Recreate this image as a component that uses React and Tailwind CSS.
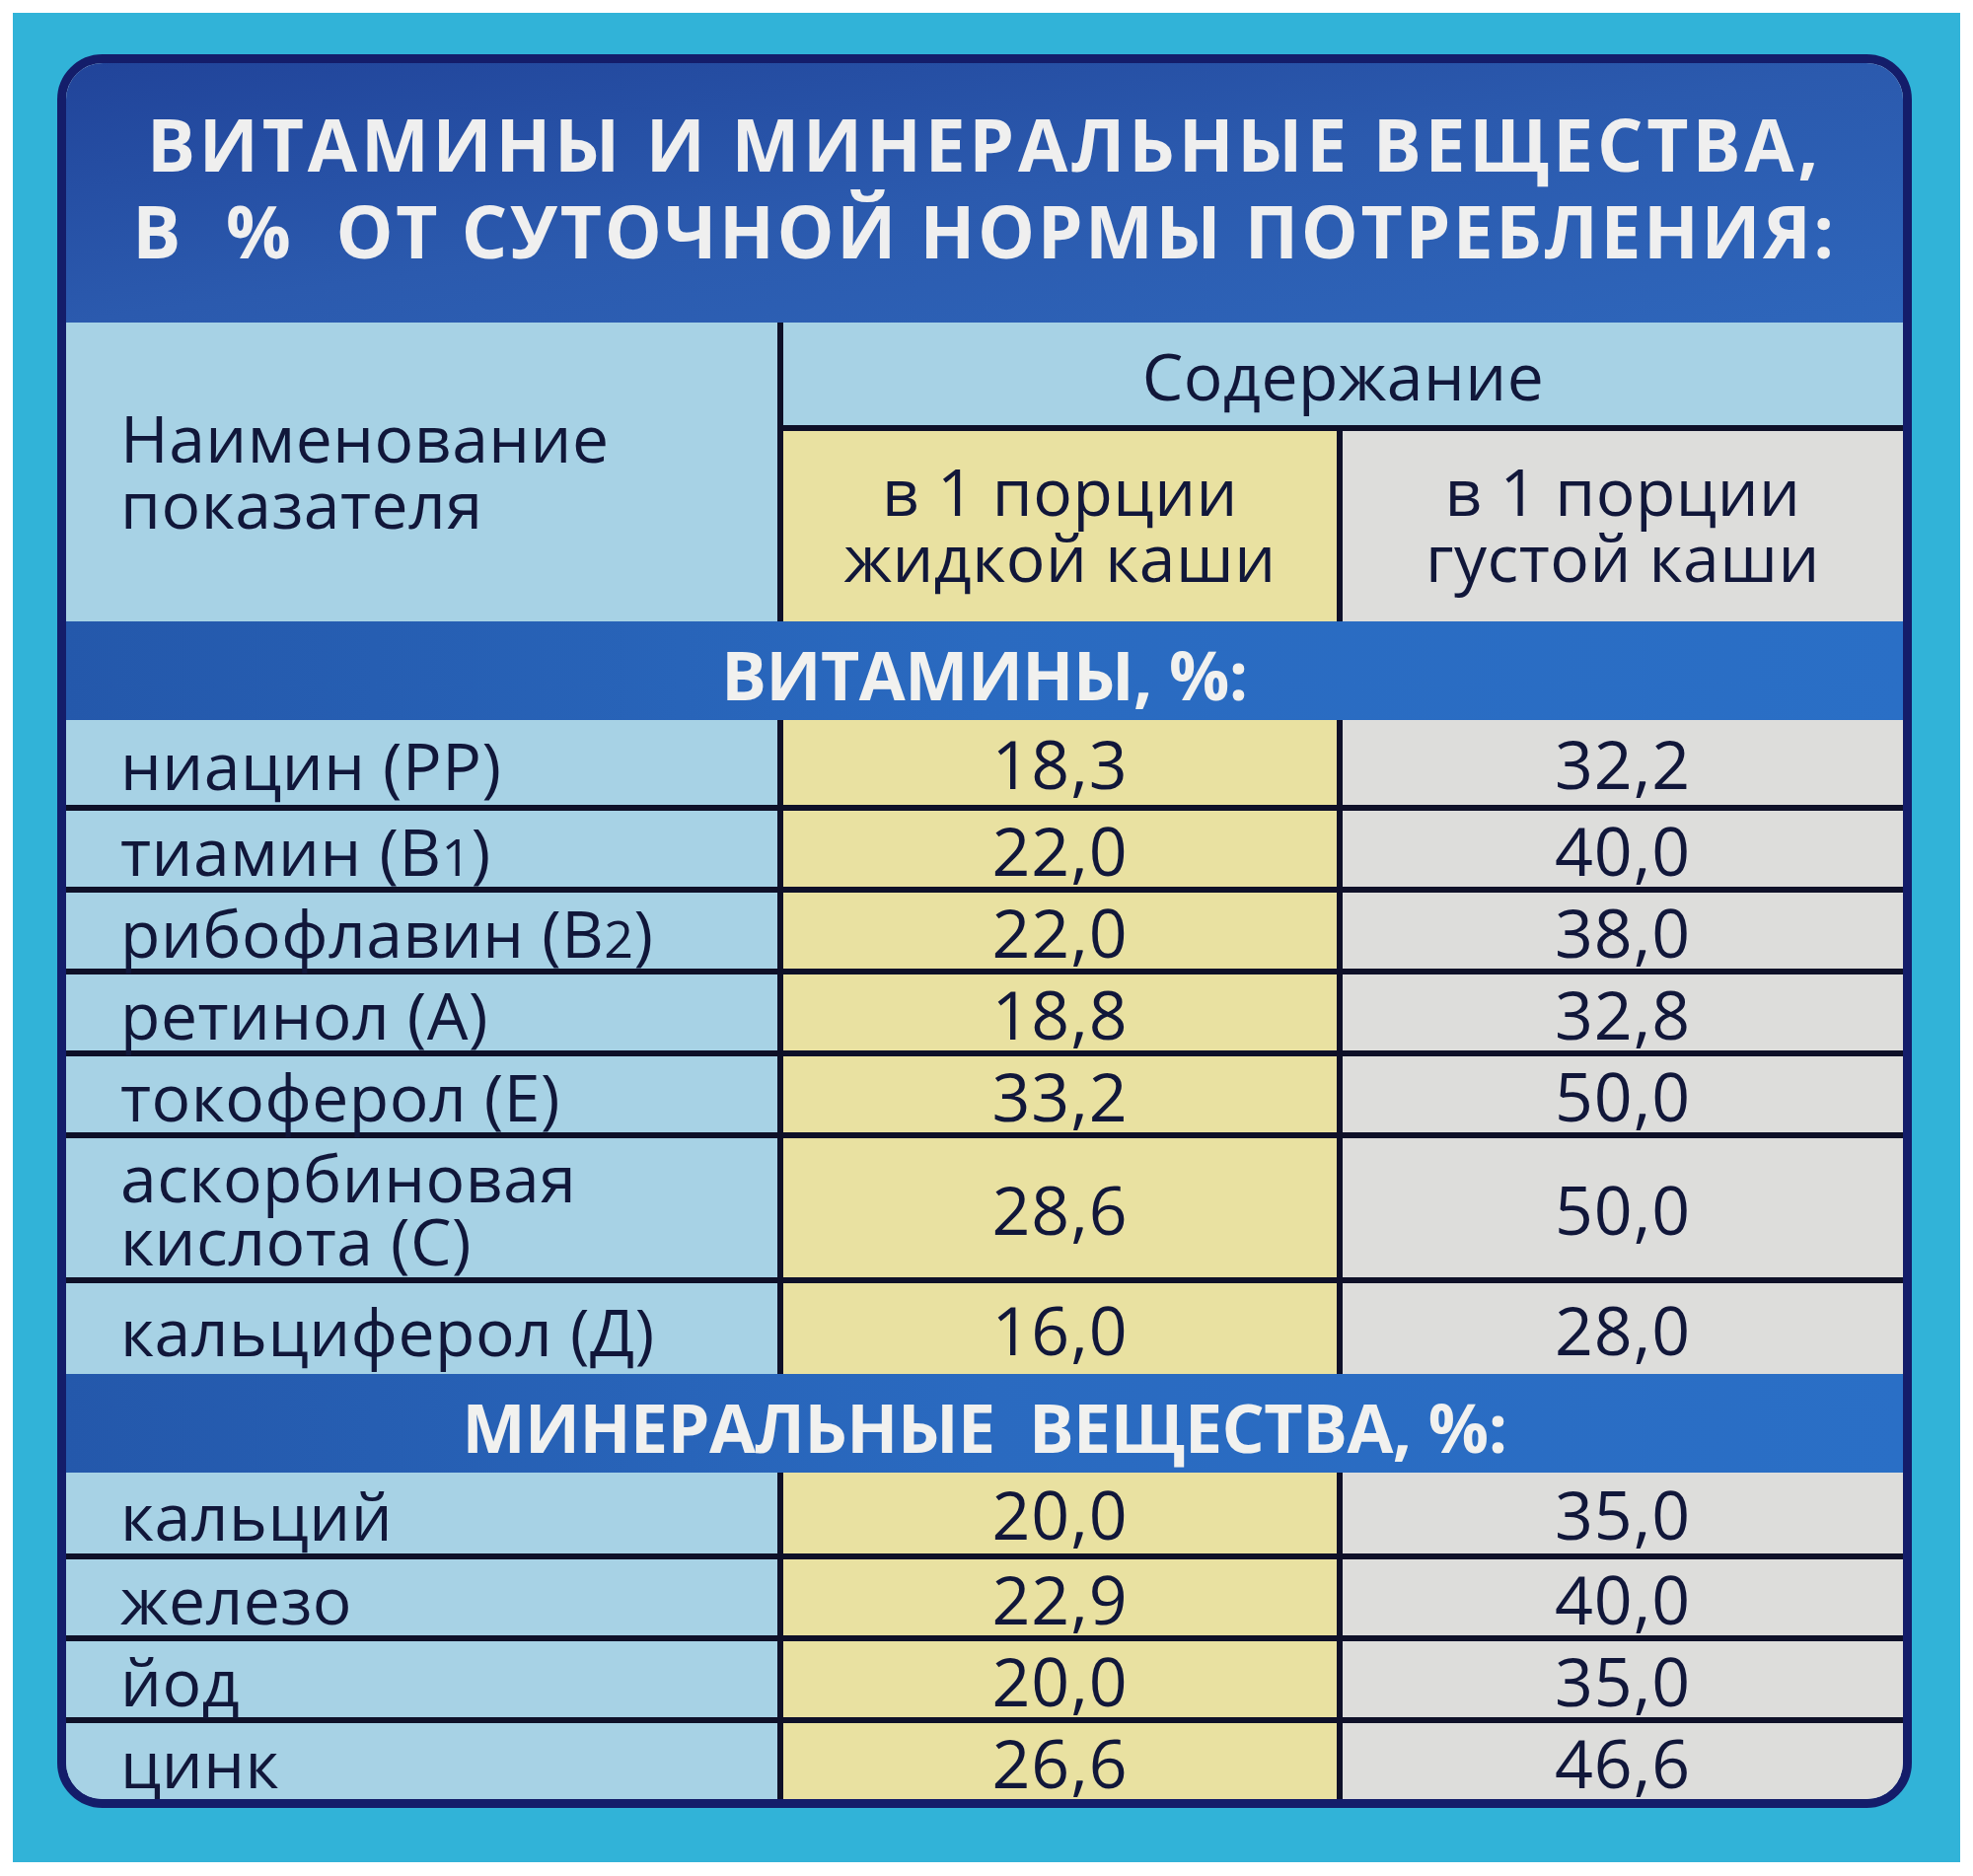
import React from "react";

const F = { fontFamily: '"Open Sans", "Noto Sans", "DejaVu Sans", sans-serif' };

const vitamins = [
  { name: <>ниацин (РР)</>, a: "18,3", b: "32,2", h: "h-[92px]" },
  { name: <>тиамин (В<span className="text-[52px]">1</span>)</>, a: "22,0", b: "40,0", h: "h-[83px]" },
  { name: <>рибофлавин (В<span className="text-[52px]">2</span>)</>, a: "22,0", b: "38,0", h: "h-[83px]" },
  { name: <>ретинол (А)</>, a: "18,8", b: "32,8", h: "h-[83px]" },
  { name: <>токоферол (Е)</>, a: "33,2", b: "50,0", h: "h-[83px]" },
  { name: <>аскорбиновая<br />кислота (С)</>, a: "28,6", b: "50,0", h: "h-[147px]", two: true },
  { name: <>кальциферол (Д)</>, a: "16,0", b: "28,0", h: "h-[92px]", last: true },
];

const minerals = [
  { name: "кальций", a: "20,0", b: "35,0", h: "h-[88px]" },
  { name: "железо", a: "22,9", b: "40,0", h: "h-[83px]" },
  { name: "йод", a: "20,0", b: "35,0", h: "h-[83px]" },
  { name: "цинк", a: "26,6", b: "46,6", h: "h-[77px]", last: true },
];

function Row({ r }) {
  return (
    <div
      className={`flex ${r.h} ${r.last ? "" : "border-b-[6px] border-[#0e1028]"} text-[#11173a]`}
    >
      <div
        className={`w-[727px] shrink-0 bg-[#a7d2e5] border-r-[6px] border-[#0e1028] pl-[55px] flex items-center text-[66px] tracking-[0.5px] ${
          r.two ? "leading-[64px]" : "leading-[1]"
        }`}
      >
        <div className={r.two ? "" : "pt-[3px]"}>{r.name}</div>
      </div>
      <div className="w-[567px] shrink-0 bg-[#e9e1a1] border-r-[6px] border-[#0e1028] flex items-center justify-center leading-[1] pt-[2px] text-[68px] tracking-[1px]">
        {r.a}
      </div>
      <div className="flex-1 bg-[#dddddb] flex items-center justify-center leading-[1] pt-[2px] text-[68px] tracking-[1px]">
        {r.b}
      </div>
    </div>
  );
}

function Band({ children }) {
  return (
    <div className="h-[100px] flex items-center justify-center bg-gradient-to-r from-[#2458ab] via-[#2a6ac0] to-[#2a6fc6] text-[#f1f1ef] text-[68px] font-bold tracking-[-0.5px] leading-[1] whitespace-pre pt-[8px]">
      {children}
    </div>
  );
}

export default function App() {
  return (
    <div className="w-[2000px] h-[1902px] bg-white p-[13px] pb-[14px]" style={F}>
      <div className="w-full h-full bg-[#31b3d8] pt-[42px] pl-[45px] pr-[49px]">
        <div className="w-[1880px] rounded-[46px] border-[9px] border-[#141d6a] overflow-hidden bg-[#a7d2e5]">
          {/* Title */}
          <div className="h-[263px] bg-gradient-to-br from-[#21449a] via-[#2b5aae] to-[#2e66bb] flex flex-col items-center justify-center text-[#efefef] font-bold text-[73px] leading-[88px] pb-[12px] whitespace-pre">
            <div className="tracking-[3.8px]">ВИТАМИНЫ И МИНЕРАЛЬНЫЕ ВЕЩЕСТВА,</div>
            <div className="tracking-[2.6px]">В  %  ОТ СУТОЧНОЙ НОРМЫ ПОТРЕБЛЕНИЯ:</div>
          </div>

          {/* Header */}
          <div className="flex h-[303px] text-[66px] tracking-[0.5px] text-[#11173a] leading-[67px]">
            <div className="w-[727px] shrink-0 bg-[#a7d2e5] border-r-[6px] border-[#0e1028] pl-[55px] flex items-center">
              <div className="pb-[4px]">
                Наименование
                <br />
                показателя
              </div>
            </div>
            <div className="flex-1 flex flex-col">
              <div className="h-[110px] bg-[#a7d2e5] border-b-[6px] border-[#0e1028] flex items-center justify-center pt-[2px]">
                Содержание
              </div>
              <div className="flex-1 flex">
                <div className="w-[567px] shrink-0 bg-[#e9e1a1] border-r-[6px] border-[#0e1028] flex items-center justify-center text-center">
                  <div className="pb-[6px]">
                    в 1 порции
                    <br />
                    жидкой каши
                  </div>
                </div>
                <div className="flex-1 bg-[#dddddb] flex items-center justify-center text-center">
                  <div className="pb-[6px]">
                    в 1 порции
                    <br />
                    густой каши
                  </div>
                </div>
              </div>
            </div>
          </div>

          <Band>ВИТАМИНЫ, %:</Band>
          {vitamins.map((r, i) => (
            <Row key={i} r={r} />
          ))}
          <Band>МИНЕРАЛЬНЫЕ  ВЕЩЕСТВА, %:</Band>
          {minerals.map((r, i) => (
            <Row key={i} r={r} />
          ))}
        </div>
      </div>
    </div>
  );
}
